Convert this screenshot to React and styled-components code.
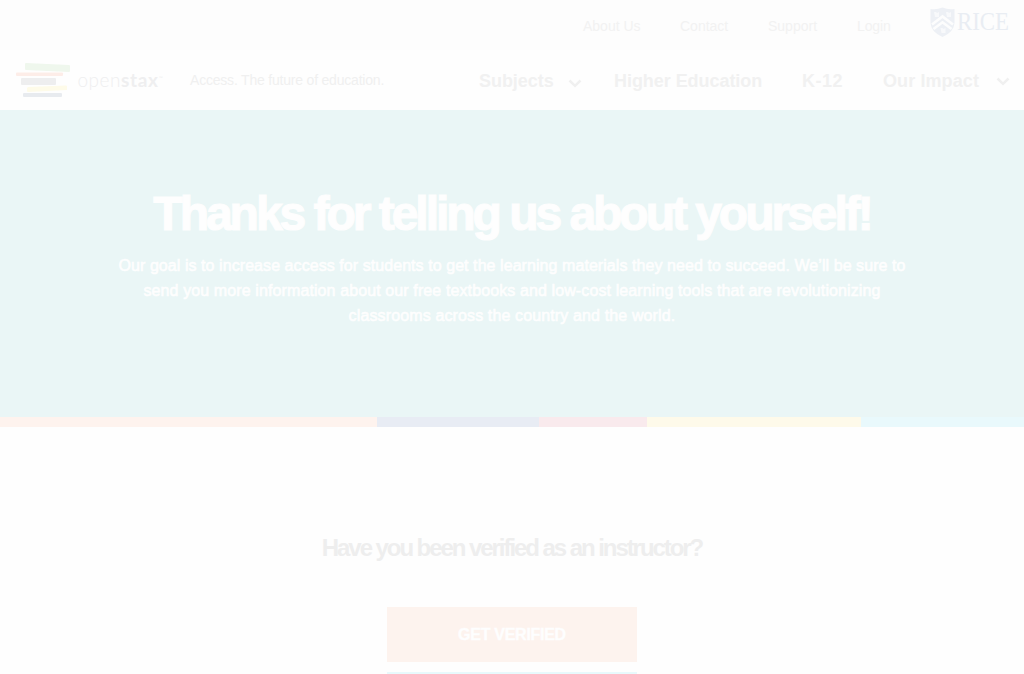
import React from 'react';
import styled, { createGlobalStyle } from 'styled-components';

const Global = createGlobalStyle`
  * { box-sizing: border-box; }
  body { margin: 0; background: #fefefe; font-family: "Liberation Sans", Arial, sans-serif; overflow: hidden; }
`;
const Page = styled.div`height: 674px; overflow: hidden; display: flex; flex-direction: column;`;
const TopBar = styled.nav`
  height: 50px; flex: none; display: flex; justify-content: flex-end; align-items: flex-start;
  padding: 0 14px 0 0; background: #fdfdfd;
`;
const TopLink = styled.a`
  width: ${p => p.$w}px; margin-right: 40px; padding-top: 18px; font-size: 14px; line-height: 17px;
  letter-spacing: ${p => p.$ls}px; white-space: nowrap; color: #f2f2f2;
`;
const RiceMark = styled.svg`display: block; width: 80px; height: 36px; margin-top: 6px; overflow: visible;`;
const Header = styled.header`height: 60px; flex: none; display: flex; padding-left: 16px;`;
const Brand = styled.svg`display: block; width: 152px; height: 40px; margin-top: 11px;`;
const Tagline = styled.span`
  width: 289px; margin-left: 22px; padding-top: 22px; font-size: 14px; line-height: 17px;
  letter-spacing: -0.2px; color: #f0f0f0; white-space: nowrap;
`;
const MenuItem = styled.a`
  display: flex; width: ${p => p.$w}px; padding-top: 20px; font-size: 18px; line-height: 22px; font-weight: 700;
  letter-spacing: ${p => p.$ls}px; color: #f1f1f1; white-space: nowrap;
  margin-left: ${p => p.$gap || 0}px;
`;
const Caret = styled.svg`width: 14px; height: 9px; margin: ${p => p.$top}px 0.5px 0 auto;`;
const Hero = styled.section`
  height: 307px; flex: none; display: flex; flex-direction: column; align-items: center;
  background: #eaf6f6; color: #fefefe; padding-top: 75px;
`;
const Title = styled.h1`
  margin: 0; font-size: 48px; line-height: 58px; font-weight: 700; letter-spacing: -3.03px; white-space: nowrap;
  -webkit-text-stroke: 1.2px #fefefe;
`;
const Copy = styled.p`
  margin: 10px 0 0; font-size: 16px; line-height: 25px; text-align: center; -webkit-text-stroke: 0.6px #fefefe;
`;
const Line = styled.span`display: block; white-space: nowrap; letter-spacing: ${p => p.$ls}px;`;
const Stripe = styled.div`height: 10px; flex: none; display: flex;`;
const Band = styled.i`width: ${p => p.$w}px; background: ${p => p.$c};`;
const Verify = styled.section`display: flex; flex-direction: column; align-items: center; padding-top: 106px;`;
const Question = styled.h2`
  margin: 0; font-size: 24px; line-height: 30px; font-weight: 700; letter-spacing: -2.06px; color: #eeeeee; white-space: nowrap;
`;
const Button = styled.a`
  width: 250px; height: 55px; margin-top: 44px; display: flex; justify-content: center; align-items: center;
  background: #fdf3ee; color: #fefefe; font-size: 16px; font-weight: 700; letter-spacing: -0.28px;
  -webkit-text-stroke: 0.4px #fefefe;
`;
const NextEdge = styled.div`width: 250px; height: 20px; margin-top: 10px; border-top: 2px solid #e8f9fc;`;

const Chevron = ({ top }) => (
  <Caret $top={top} viewBox="0 0 14 9"><path d="M1.5 1.5 L7 6.8 L12.5 1.5" fill="none" stroke="#f0f0f0" strokeWidth="2.5" /></Caret>
);

const OpenStax = () => (
  <Brand viewBox="0 0 152 40">
    <path d="M10 2 L53 4 Q54 4 54 5 V10 Q54 11 53 11 L10 9 Q9 9 9 8 V3 Q9 2 10 2Z" fill="#eff7ed" />
    <rect x="0" y="11.5" width="47" height="3.5" rx="1" fill="#fdede8" />
    <rect x="5" y="17" width="35" height="7" rx="1" fill="#eeeeef" />
    <path d="M12 26 L50 24.5 Q51 24.5 51 25.5 V29 L12 31 Q11 31 11 30 V27Z" fill="#fefbe9" />
    <rect x="7" y="32" width="39" height="4" rx="1" fill="#e8ebef" />
    <g fontFamily="Lato, sans-serif" fontSize="19" fill="#efeff0">
      <text x="61.5" y="26" fontWeight="300" textLength="43" lengthAdjust="spacing">open</text>
      <text x="105" y="26" fontWeight="700" textLength="37" lengthAdjust="spacing">stax</text>
      <text x="143" y="19" fontSize="5">™</text>
    </g>
  </Brand>
);

const Rice = () => (
  <RiceMark viewBox="0 0 80 36">
    <path d="M0.5 3 Q7 4 12.5 1.5 Q18 4 24.5 3 V17 Q24 26 12.5 31 Q1 26 0.5 17Z" fill="#edf0f5" />
    <path d="M2 18.5 L12.5 10.5 L23 18.5 M3.5 23 L12.5 16.3 L21.5 23" fill="none" stroke="#fdfdfd" strokeWidth="2.6" />
    <g fill="#f8f9fb"><path d="M4 6h2l1 1 2-1v5H5z M16 6h2l1 1 2-1v5h-4z M10.5 22h2l1 1 2-1v5h-4z" /></g>
    <text x="27" y="24" fontFamily="Liberation Serif, serif" fontSize="25" fill="#e9edf3" textLength="52" lengthAdjust="spacingAndGlyphs">RICE</text>
  </RiceMark>
);

const bands = [[377, '#fef3ee'], [162, '#e8ecf4'], [108, '#f9eaed'], [214, '#fefaea'], [163, '#e9f9fc']];

export default function App() {
  return (
    <Page>
      <Global />
      <TopBar>
        <TopLink $w={57} $ls={0}>About Us</TopLink>
        <TopLink $w={48} $ls={0}>Contact</TopLink>
        <TopLink $w={49} $ls={0}>Support</TopLink>
        <TopLink $w={33} $ls={-0.1}>Login</TopLink>
        <Rice />
      </TopBar>
      <Header>
        <OpenStax />
        <Tagline>Access. The future of education.</Tagline>
        <MenuItem $w={103} $ls={-0.05}>Subjects<Chevron top={9} /></MenuItem>
        <MenuItem $w={156} $ls={-0.05} $gap={32}>Higher Education</MenuItem>
        <MenuItem $w={81} $ls={0.5} $gap={32}>K-12</MenuItem>
        <MenuItem $w={127} $ls={0.1}>Our Impact<Chevron top={7} /></MenuItem>
      </Header>
      <Hero>
        <Title>Thanks for telling us about yourself!</Title>
        <Copy>
          <Line $ls={0.065}>Our goal is to increase access for students to get the learning materials they need to succeed. We’ll be sure to</Line>
          <Line $ls={0.11}>send you more information about our free textbooks and low-cost learning tools that are revolutionizing</Line>
          <Line $ls={0.13}>classrooms across the country and the world.</Line>
        </Copy>
      </Hero>
      <Stripe>{bands.map(([w, c]) => <Band key={c} $w={w} $c={c} />)}</Stripe>
      <Verify>
        <Question>Have you been verified as an instructor?</Question>
        <Button>GET VERIFIED</Button>
        <NextEdge />
      </Verify>
    </Page>
  );
}
